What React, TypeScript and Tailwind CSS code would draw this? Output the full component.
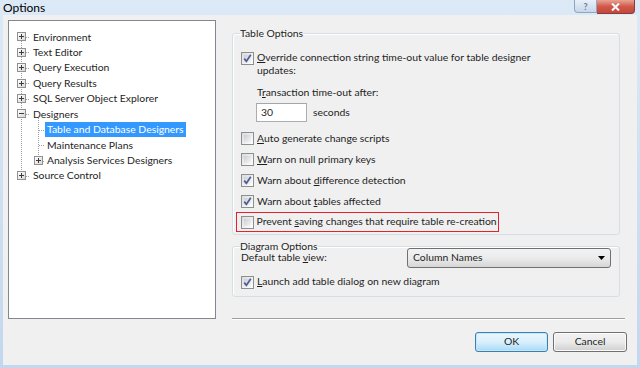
import React from "react";

const font = "font-['Segoe_UI','Lato',sans-serif]";

const Check = ({ checked }: { checked: boolean }) => (
  <span className="relative inline-block w-[13px] h-[13px] shrink-0 border border-[#8e8f8f] bg-gradient-to-br from-[#dcdcdc] to-[#ffffff]">
    <span className="absolute inset-[2px] bg-gradient-to-br from-[#cbcfd5] to-[#f6f6f6]" />
    {checked && (
      <svg className="absolute inset-0" width="11" height="11" viewBox="0 0 11 11">
        <path d="M2.2 5.6 L4.4 8.3 L8.8 1.8" fill="none" stroke="#4a5f97" strokeWidth="1.7" />
      </svg>
    )}
  </span>
);

const Row = ({ checked, children, className = "" }: { checked: boolean; children: React.ReactNode; className?: string }) => (
  <div className={`flex items-center gap-[3px] h-[21px] ${className}`}>
    <Check checked={checked} />
    <span className="whitespace-nowrap">{children}</span>
  </div>
);

const Expander = ({ open }: { open: boolean }) => (
  <span className="relative inline-block w-[9px] h-[9px] border border-[#919191] bg-gradient-to-br from-white to-[#d8d8d8]">
    <span className="absolute left-[1px] right-[1px] top-[3px] h-px bg-[#3b3b3b]" />
    {!open && <span className="absolute top-[1px] bottom-[1px] left-[3px] w-px bg-[#3b3b3b]" />}
  </span>
);

const treeItems = [
  { label: "Environment", level: 0, exp: "closed" },
  { label: "Text Editor", level: 0, exp: "closed" },
  { label: "Query Execution", level: 0, exp: "closed" },
  { label: "Query Results", level: 0, exp: "closed" },
  { label: "SQL Server Object Explorer", level: 0, exp: "closed" },
  { label: "Designers", level: 0, exp: "open" },
  { label: "Table and Database Designers", level: 1, exp: "none", selected: true },
  { label: "Maintenance Plans", level: 1, exp: "none" },
  { label: "Analysis Services Designers", level: 1, exp: "closed" },
  { label: "Source Control", level: 0, exp: "closed" },
];

const ROW = 15.45;

const TreeLines = () => {
  const cy = (i: number) => 16 + i * ROW;
  return (
    <svg className="absolute inset-0 pointer-events-none" width="205" height="296">
      <g stroke="#a0a0a0" strokeWidth="1" strokeDasharray="1 1" shapeRendering="crispEdges">
        <line x1="12.5" y1={cy(0)} x2="12.5" y2={cy(9)} />
        {[0, 1, 2, 3, 4, 5, 9].map((i) => (
          <line key={i} x1="13" y1={Math.round(cy(i)) + 0.5} x2="21" y2={Math.round(cy(i)) + 0.5} />
        ))}
        <line x1="29.5" y1={cy(5) + 4} x2="29.5" y2={cy(8)} />
        {[6, 7, 8].map((i) => (
          <line key={i} x1="30" y1={Math.round(cy(i)) + 0.5} x2="36" y2={Math.round(cy(i)) + 0.5} />
        ))}
      </g>
    </svg>
  );
};

const Tree = () => (
  <div className="relative w-[208px] h-[299px] border border-[#828790] bg-white">
    <TreeLines />
    <div className="relative pt-[8.3px]">
      {treeItems.map((it) => (
        <div key={it.label} className="relative flex items-center h-[15.45px]">
          {it.exp !== "none" && (
            <span className={`absolute flex ${it.level === 0 ? "left-[8px]" : "left-[25px]"} top-[3px]`}>
              <Expander open={it.exp === "open"} />
            </span>
          )}
          <span
            className={`${it.level === 0 ? "ml-[22px]" : "ml-[36px]"} px-[2px] leading-[15px] whitespace-nowrap ${
              it.selected ? "bg-[#3399ff] text-white" : "text-[#1e1e1e]"
            }`}
          >
            {it.label}
          </span>
        </div>
      ))}
    </div>
  </div>
);

export default function App() {
  return (
    <div className={`${font} text-[10.4px] text-[#1e1e1e] w-[640px] h-[368px] flex flex-col bg-gradient-to-b from-[#dce9f7] to-[#c3d7ed] px-[3px] pb-[3px] overflow-hidden`}>
      {/* title bar */}
      <div className="h-[15px] flex justify-between items-start shrink-0">
        <span className="text-[12px] leading-[16px] text-black">Options</span>
        <div className="flex mr-[2px]">
          <div className="w-[23px] h-[13px] border border-[#8fa6c2] border-t-0 rounded-bl-[4px] bg-gradient-to-b from-[#e8f0f9] to-[#c7d7ea] flex items-center justify-center text-[9px] font-bold text-[#6a7c94] leading-none">
            ?
          </div>
          <div className="w-[38px] h-[14px] border border-[#8a3c3c] border-t-0 border-l-0 rounded-br-[4px] bg-gradient-to-b from-[#e8a394] via-[#d0594a] to-[#c6463a] flex items-center justify-center">
            <svg width="9" height="8" viewBox="0 0 9 8">
              <path d="M1 0.5 L8 7.5 M8 0.5 L1 7.5" stroke="#ffffff" strokeWidth="2" />
            </svg>
          </div>
        </div>
      </div>

      {/* content */}
      <div className="flex-1 bg-[#f0f0f0] flex pl-[5px] pt-[5px]">
        <Tree />

        <div className="ml-[16px] w-[395px] flex flex-col">
          <fieldset className="mt-[6px] w-[388px] h-[209px] border border-[#d5dfe5] rounded-[3px] shadow-[inset_1px_1px_0_#ffffff] px-[8px] pt-0">
            <legend className="ml-[-1px] leading-[14px] text-[#1e1e1e]">Table Options</legend>
            <div className="flex items-start gap-[3px] mt-[11px]">
              <span className="mt-[1px]"><Check checked /></span>
              <span className="leading-[13px]">
                <span className="underline">O</span>verride connection string time-out value for table designer
                <br />
                updates:
              </span>
            </div>
            <div className="ml-[16px] mt-[9px] leading-[13px]">
              T<span className="underline">r</span>ansaction time-out after:
            </div>
            <div className="ml-[15px] mt-[4px] flex items-center">
              <div className="w-[51px] h-[19px] border border-[#abadb3] border-t-[#a3a6ad] bg-white pl-[4px] flex items-center">30</div>
              <span className="ml-[6px]">seconds</span>
            </div>
            <Row checked={false} className="mt-[6px]">
              <span className="underline">A</span>uto generate change scripts
            </Row>
            <Row checked={false}>
              <span className="underline">W</span>arn on null primary keys
            </Row>
            <Row checked>
              Warn about <span className="underline">d</span>ifference detection
            </Row>
            <Row checked>
              Warn about <span className="underline">t</span>ables affected
            </Row>
            <div className="ml-[-5px] w-[263px] h-[20px] border-[1.5px] border-[#e0242a] pl-[3.5px] flex items-center">
              <Row checked={false}>
                Prevent <span className="underline">s</span>aving changes that require table re-creation
              </Row>
            </div>
          </fieldset>

          <fieldset className="mt-[5px] w-[388px] h-[57px] border border-[#d5dfe5] rounded-[3px] shadow-[inset_1px_1px_0_#ffffff] px-[8px]">
            <legend className="ml-[-1px] leading-[12px]">Diagram Options</legend>
            <div className="flex items-center justify-between h-[20px] mt-[-4px]">
              <span>
                Default table <span className="underline">v</span>iew:
              </span>
              <div className="w-[204px] h-[20px] border border-[#707070] rounded-[3px] bg-gradient-to-b from-[#f2f2f2] via-[#ebebeb] to-[#d6d6d6] flex items-center justify-between pl-[5px] pr-[5px]">
                <span>Column Names</span>
                <svg width="7" height="4" viewBox="0 0 7 4">
                  <path d="M0 0 H7 L3.5 4 Z" fill="#000" />
                </svg>
              </div>
            </div>
            <Row checked className="mt-[3.5px]">
              <span className="underline">L</span>aunch add table dialog on new diagram
            </Row>
          </fieldset>

          <div className="mt-[21px] h-[2px] border-t border-[#a0a0a0] border-b border-b-white w-[393px]" />

          <div className="mt-[12px] flex justify-end gap-[5px]">
            <button className="w-[73px] h-[20px] rounded-[3px] border border-[#3c7fb1] bg-gradient-to-b from-[#eaf6fd] via-[#d9f0fc] to-[#a7d9f5] shadow-[inset_0_0_0_1px_#c6e7f8] text-[#1e1e1e]">
              OK
            </button>
            <button className="w-[74px] h-[20px] rounded-[3px] border border-[#707070] bg-gradient-to-b from-[#f2f2f2] via-[#ebebeb] to-[#cfcfcf] shadow-[inset_0_0_0_1px_#fbfbfb] text-[#1e1e1e]">
              Cancel
            </button>
          </div>
        </div>
      </div>
    </div>
  );
}
